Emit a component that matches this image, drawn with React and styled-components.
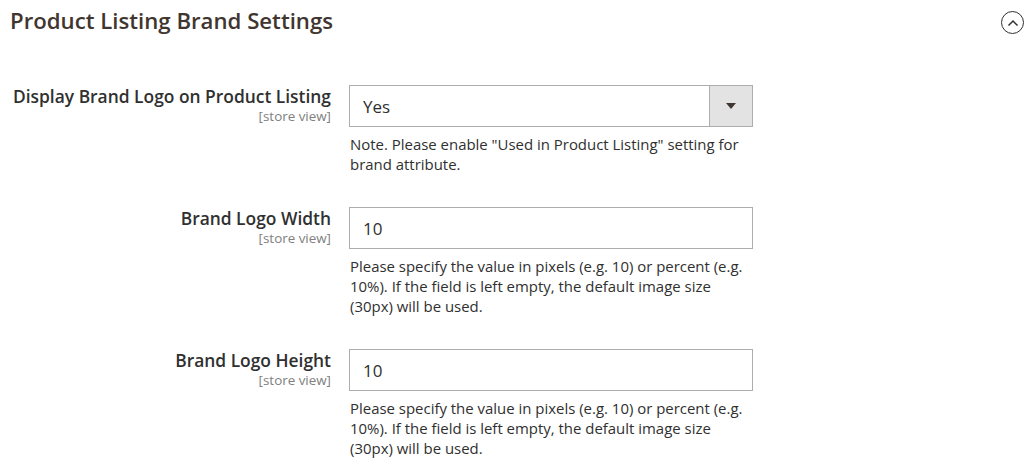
import styled, { createGlobalStyle } from "styled-components"

const GlobalStyle = createGlobalStyle`
  body {
    margin: 0;
    background: #ffffff;
    font-family: "Open Sans", "DejaVu Sans", sans-serif;
    color: #303030;
  }
`

const Section = styled.div`
  width: 1036px;
  height: 467px;
  overflow: hidden;
  box-sizing: border-box;
`

const Header = styled.div`
  display: flex;
  align-items: center;
  justify-content: space-between;
  padding: 2px 12px 0 10px;
  height: 36px;
`

const Title = styled.h2`
  margin: 0;
  font-size: 22.2px;
  font-weight: 600;
  color: #41362f;
`

const Toggle = styled.span`
  width: 21px;
  height: 21px;
  border: 1.3px solid #303030;
  border-radius: 50%;
  display: flex;
  align-items: center;
  justify-content: center;
  margin-top: 5px;
`

const Fields = styled.div`
  display: flex;
  flex-direction: column;
  gap: 33px;
  padding-top: 47px;
`

const Row = styled.div`
  display: grid;
  grid-template-columns: 331px 404px;
  column-gap: 18px;
`

const Label = styled.div`
  text-align: right;
`

const LabelText = styled.div`
  font-size: 17.4px;
  font-weight: 600;
  color: #303030;
  line-height: 23px;
`

const Scope = styled.div`
  font-size: 13.4px;
  color: #808080;
  line-height: 16px;
`

const Control = styled.div`
  display: flex;
  flex-direction: column;
`

const Box = styled.div`
  height: 42px;
  box-sizing: border-box;
  border: 1px solid #adadad;
  display: flex;
  align-items: stretch;
  font-size: 17px;
  color: #303030;
`

const Value = styled.div`
  flex: 1;
  display: flex;
  align-items: center;
  padding-left: 13px;
`

const Arrow = styled.div`
  width: 42px;
  background: #e3e3e3;
  border-left: 1px solid #adadad;
  display: flex;
  align-items: center;
  justify-content: center;
`

const Note = styled.div`
  margin-top: 7px;
  font-size: 14.95px;
  line-height: 20px;
  color: #303030;
  padding-left: 1px;
`

const fields = [
  {
    label: "Display Brand Logo on Product Listing",
    value: "Yes",
    select: true,
    note: 'Note. Please enable "Used in Product Listing" setting for brand attribute.',
  },
  {
    label: "Brand Logo Width",
    value: "10",
    note: "Please specify the value in pixels (e.g. 10) or percent (e.g. 10%). If the field is left empty, the default image size (30px) will be used.",
  },
  {
    label: "Brand Logo Height",
    value: "10",
    note: "Please specify the value in pixels (e.g. 10) or percent (e.g. 10%). If the field is left empty, the default image size (30px) will be used.",
  },
]

const App = () => {
  return (
    <Section>
      <GlobalStyle />
      <Header>
        <Title>Product Listing Brand Settings</Title>
        <Toggle>
          <svg width="12" height="8" viewBox="0 0 12 8">
            <path d="M1.5 6.5 L6 2 L10.5 6.5" fill="none" stroke="#303030" strokeWidth="1.5" />
          </svg>
        </Toggle>
      </Header>
      <Fields>
        {fields.map((f) => (
          <Row key={f.label}>
            <Label>
              <LabelText>{f.label}</LabelText>
              <Scope>[store view]</Scope>
            </Label>
            <Control>
              <Box>
                <Value>{f.value}</Value>
                {f.select && (
                  <Arrow>
                    <svg width="10" height="6" viewBox="0 0 10 6">
                      <path d="M0 0 H10 L5 6 Z" fill="#41362f" />
                    </svg>
                  </Arrow>
                )}
              </Box>
              <Note>{f.note}</Note>
            </Control>
          </Row>
        ))}
      </Fields>
    </Section>
  )
}

export default App
